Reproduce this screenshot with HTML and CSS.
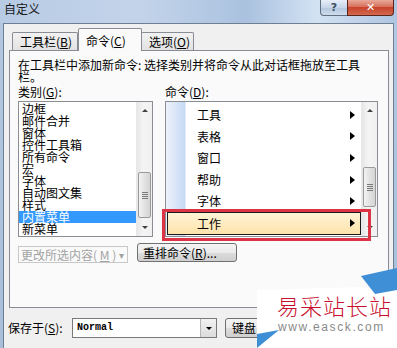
FILE: index.html
```html
<!DOCTYPE html>
<html lang="zh-CN">
<head>
  <meta charset="UTF-8">
  <title>自定义</title>
  <link rel="stylesheet" href="styles.css">
</head>
<body>
  <div class="window">
    <div class="titlebar">
      <span class="title">自定义</span>
      <div class="caption-buttons">
        <span class="btn-help">?</span>
        <span class="btn-close">✕</span>
      </div>
    </div>

    <div class="client">
      <div class="tabs">
        <div class="tab">工具栏(<u>B</u>)</div>
        <div class="tab active">命令(<u>C</u>)</div>
        <div class="tab">选项(<u>O</u>)</div>
      </div>

      <div class="panel">
        <p class="intro">在工具栏中添加新命令: 选择类别并将命令从此对话框拖放至工具栏。</p>

        <div class="lists">
          <div class="list-col cat-col">
            <div class="field-label">类别(<u>G</u>):</div>
            <div class="listbox">
              <ul class="cat-items">
                <li>边框</li>
                <li>邮件合并</li>
                <li>窗体</li>
                <li>控件工具箱</li>
                <li>所有命令</li>
                <li>宏</li>
                <li>字体</li>
                <li>自动图文集</li>
                <li>样式</li>
                <li class="selected">内置菜单</li>
                <li>新菜单</li>
              </ul>
              <div class="scrollbar cat-scroll">
                <span class="sb-arrow up"></span>
                <span class="sb-track"><span class="sb-thumb"><i></i><i></i><i></i><i></i></span></span>
                <span class="sb-arrow down"></span>
              </div>
            </div>
          </div>

          <div class="list-col cmd-col">
            <div class="field-label">命令(<u>D</u>):</div>
            <div class="listbox cmd-box">
              <ul class="cmd-items">
                <li>工具<span class="submenu"></span></li>
                <li>表格<span class="submenu"></span></li>
                <li>窗口<span class="submenu"></span></li>
                <li>帮助<span class="submenu"></span></li>
                <li>字体<span class="submenu"></span></li>
                <li class="hover">工作<span class="submenu"></span></li>
              </ul>
              <div class="scrollbar cmd-scroll">
                <span class="sb-arrow up"></span>
                <span class="sb-track"><span class="sb-thumb"><i></i><i></i><i></i><i></i></span></span>
                <span class="sb-arrow down"></span>
              </div>
              <div class="callout"></div>
            </div>
          </div>
        </div>

        <div class="button-row">
          <div class="dropdown-btn">更改所选内容(<u>M</u>) <span class="caret">▾</span></div>
          <div class="push-btn rearrange">重排命令(<u>R</u>)...</div>
        </div>
      </div>

      <div class="footer">
        <span class="save-label">保存于(<u>S</u>):</span>
        <div class="combo">
          <span class="combo-value">Normal</span>
          <span class="combo-arrow"></span>
        </div>
        <div class="push-btn keyboard">键盘</div>
      </div>
    </div>

    <div class="watermark">
      <svg class="wm-shapes" width="140" height="80" viewBox="0 0 140 80">
        <polygon points="0,22 140,18 140,80 0,80" fill="#ffffff"/>
        <polygon points="104,8 140,0 140,22 118,26" fill="#3f8fd6"/>
        <polygon points="0,80 0,66 22,62" fill="#3f8fd6"/>
      </svg>
      <div class="wm-title">易采站长站</div>
      <div class="wm-url">www.easck.com</div>
    </div>
  </div>
</body>
</html>
```

FILE: styles.css
```css
* {
  box-sizing: border-box;
}

body {
  margin: 0;
  width: 397px;
  height: 348px;
  overflow: hidden;
  font-family: "Noto Sans CJK SC", sans-serif;
  font-size: 12px;
  color: #000;
  background: #f0f0f0;
}

u {
  text-decoration: underline;
}

.window {
  position: relative;
  width: 397px;
  height: 348px;
  display: flex;
  flex-direction: column;
  background: linear-gradient(to bottom, #b4c8e1, #a9bed9);
  overflow: hidden;
}

/* title bar */

.titlebar {
  height: 23px;
  flex-shrink: 0;
  display: flex;
  justify-content: space-between;
  align-items: flex-start;
  background: linear-gradient(to right, #b7cbe4 0%, #c3d4ea 35%, #aac2df 62%, #d3e2f3 80%, #aec5e1 100%);
}

.title {
  padding: 2px 0 0 4px;
  line-height: 14px;
  font-size: 12px;
  color: #1a1a1a;
}

.caption-buttons {
  display: flex;
  margin-right: 3px;
}

.btn-help,
.btn-close {
  height: 16px;
  display: flex;
  align-items: center;
  justify-content: center;
  border: 1px solid #5f6f82;
  border-top: none;
  font-family: "DejaVu Sans", sans-serif;
  font-weight: bold;
}

.btn-help {
  width: 27px;
  border-right: none;
  border-radius: 0 0 0 4px;
  background: linear-gradient(to bottom, #e6eef8, #c7d6ea 50%, #b3c6df 51%, #cfdcec);
  color: #3d4c60;
  font-size: 11px;
}

.btn-close {
  width: 47px;
  border-color: #5b241c;
  border-radius: 0 0 4px 0;
  background: linear-gradient(to bottom, #e9a99b, #d8705c 45%, #c7432b 50%, #d26a4f);
  color: #fff;
  font-size: 11px;
}

/* client area */

.client {
  flex: 1;
  margin: 0 3px;
  background: #f0f0f0;
  border: 1px solid #6f7f93;
  border-bottom: none;
  display: flex;
  flex-direction: column;
}

.tabs {
  height: 26px;
  display: flex;
  align-items: flex-end;
  padding-left: 8px;
  position: relative;
  z-index: 1;
}

.tab {
  height: 18px;
  line-height: 17px;
  padding: 0 7px;
  border: 1px solid #898c95;
  border-bottom: none;
  border-radius: 2px 2px 0 0;
  background: linear-gradient(to bottom, #f2f2f2, #e2e2e2);
  margin-right: -1px;
  white-space: nowrap;
}

.tab:first-child {
  width: 66px;
}

.tab.active {
  height: 23px;
  width: 64px;
  margin-bottom: -1px;
  margin-left: 1px;
  margin-right: -1px;
  padding-top: 3px;
  background: #fafafa;
  position: relative;
}

.tab:last-child {
  width: 53px;
}

.panel {
  margin-left: 5px;
  width: 380px;
  height: 258px;
  border: 1px solid #898c95;
  background: #fafafa;
  padding: 8px 0 0 8px;
  flex-shrink: 0;
}

.intro {
  margin: 0;
  width: 352px;
  line-height: 11.5px;
}

.field-label {
  height: 15px;
  line-height: 12px;
  margin-top: 4px;
}

.lists {
  display: flex;
  gap: 12px;
}

.cat-col {
  width: 135px;
}

.cmd-col {
  width: 213px;
}

.listbox {
  height: 136px;
  border: 1px solid #8a8d94;
  background: #fff;
  display: flex;
  position: relative;
}

.cat-items,
.cmd-items {
  flex: 1;
  list-style: none;
  margin: 0;
  padding: 1px 0 0 0;
  overflow: hidden;
}

.cat-items li {
  height: 12px;
  line-height: 12px;
  padding-left: 3px;
  white-space: nowrap;
}

.cat-items li.selected {
  background: #3399ff;
  color: #fff;
}

.cmd-items {
  padding-top: 2px;
  background: linear-gradient(to right, #eef3fb 0, #c6d8f4 19px, #fff 20px);
}

.cmd-items li {
  height: 21.6px;
  line-height: 21.6px;
  padding-left: 30px;
  display: flex;
  align-items: center;
  justify-content: space-between;
  padding-right: 6px;
  margin-left: 1px;
}

.cmd-items li.hover {
  border: 1px solid #1a1a1a;
  background: linear-gradient(to bottom, #fff4d6, #fde3aa);
  padding-left: 29px;
  padding-right: 5px;
  height: 23px;
}

.submenu {
  width: 0;
  height: 0;
  border-left: 5px solid #000;
  border-top: 4px solid transparent;
  border-bottom: 4px solid transparent;
}

.callout {
  position: absolute;
  left: -4px;
  top: 107px;
  width: 209px;
  height: 32px;
  border: 3px solid #dc3444;
}

/* scrollbars */

.scrollbar {
  width: 16px;
  display: flex;
  flex-direction: column;
  background: linear-gradient(to right, #e6e6e6, #f4f4f4 40%, #f0f0f0);
  border-left: 1px solid #e8e8e8;
}

.sb-arrow {
  height: 17px;
  flex-shrink: 0;
  display: flex;
  align-items: center;
  justify-content: center;
}

.sb-arrow::after {
  content: "";
  width: 0;
  height: 0;
  border-left: 3px solid transparent;
  border-right: 3px solid transparent;
}

.sb-arrow.up::after {
  border-bottom: 3px solid #404040;
}

.sb-arrow.down::after {
  border-top: 3px solid #404040;
}

.sb-track {
  flex: 1;
  display: flex;
  flex-direction: column;
}

.sb-thumb {
  margin: 0 1px;
  border: 1px solid #9a9a9a;
  border-radius: 2px;
  background: linear-gradient(to right, #f3f3f3, #e2e2e2 50%, #d4d4d4);
  display: flex;
  flex-direction: column;
  align-items: center;
  justify-content: center;
  gap: 1px;
}

.sb-thumb i {
  width: 6px;
  height: 1px;
  background: #7a7a7a;
}

.cat-scroll .sb-thumb {
  margin-top: 53px;
  height: 46px;
}

.cmd-scroll .sb-thumb {
  margin-top: 48px;
  height: 40px;
}

/* buttons */

.button-row {
  display: flex;
  align-items: flex-start;
  margin-top: 6px;
}

.dropdown-btn {
  width: 110px;
  height: 17px;
  margin-top: 3px;
  border: 1px solid #c8c8c8;
  color: #a3a3a3;
  line-height: 15px;
  padding: 0 3px 0 2px;
  display: flex;
  justify-content: space-between;
  white-space: nowrap;
}

.caret {
  font-size: 10px;
}

.push-btn {
  height: 19px;
  border: 1px solid #707070;
  border-radius: 3px;
  background: linear-gradient(to bottom, #f4f4f4, #ebebeb 50%, #dddddd 51%, #cfcfcf);
  line-height: 17px;
  white-space: nowrap;
}

.rearrange {
  width: 100px;
  margin-left: 9px;
  padding-left: 5px;
}

/* footer */

.footer {
  display: flex;
  align-items: flex-start;
  padding: 10px 0 0 4px;
}

.save-label {
  width: 64px;
  line-height: 20px;
}

.combo {
  width: 145px;
  height: 20px;
  border: 1px solid #7a7a7a;
  background: #fff;
  display: flex;
}

.combo-value {
  flex: 1;
  padding-left: 4px;
  font-family: "Liberation Mono", monospace;
  font-size: 10px;
  font-weight: bold;
  line-height: 18px;
}

.combo-arrow {
  width: 16px;
  border-left: 1px solid #b5b5b5;
  background: linear-gradient(to bottom, #f2f2f2, #dcdcdc);
  display: flex;
  align-items: center;
  justify-content: center;
}

.combo-arrow::after {
  content: "";
  border-left: 3px solid transparent;
  border-right: 3px solid transparent;
  border-top: 3px solid #000;
}

.keyboard {
  width: 38px;
  height: 20px;
  margin-left: 8px;
  padding-left: 6px;
}

/* watermark overlay */

.watermark {
  position: absolute;
  right: 0;
  bottom: 0;
  width: 140px;
  height: 80px;
}

.wm-shapes {
  position: absolute;
  left: 0;
  top: 0;
}

.wm-title {
  position: absolute;
  left: 20px;
  top: 25px;
  font-size: 22px;
  font-weight: 300;
  line-height: 24px;
  color: #c8102e;
  letter-spacing: 1px;
  white-space: nowrap;
}

.wm-url {
  position: absolute;
  left: 21px;
  top: 52px;
  font-family: "Liberation Sans", sans-serif;
  font-size: 12px;
  line-height: 14px;
  color: #8a8a8a;
  letter-spacing: 1.6px;
  white-space: nowrap;
}
```
